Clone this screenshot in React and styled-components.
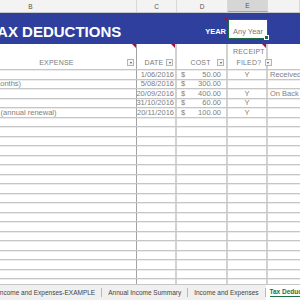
import React from "react";
import styled, { createGlobalStyle, css } from "styled-components";

const Global = createGlobalStyle`
  html, body { margin: 0; padding: 0; background: #fff; }
  body { font-family: "Liberation Sans", Arial, sans-serif; overflow: hidden; }
`;

const COLS = "212px 40px 51px 40px 32px";

const Sheet = styled.div`
  width: 300px;
  height: 300px;
  display: flex;
  flex-direction: column;
  overflow: hidden;
  background: #fff;
`;

const Viewport = styled.div`
  flex: 1;
  overflow: hidden;
  position: relative;
`;

const Canvas = styled.div`
  width: 375px;
  margin-left: -75px;
  display: flex;
  flex-direction: column;
`;

const ColHeaderBar = styled.div`
  display: grid;
  grid-template-columns: ${COLS};
  height: 13px;
  background: #f3f3f3;
  box-sizing: border-box;
  border-bottom: 1px solid #c9c9c9;
`;

const ColLetter = styled.div`
  display: flex;
  align-items: center;
  justify-content: center;
  font-size: 6.5px;
  color: #555;
  box-sizing: border-box;
  border-right: 1px solid #d9d9d9;
  ${(p) =>
    p.$active &&
    css`
      background: #d6d6d6;
      border-bottom: 1px solid #8fb39d;
    `}
`;

const Banner = styled.div`
  display: grid;
  grid-template-columns: 252px 51px 40px 32px;
  height: 31px;
  background: #2e3f9d;
  align-items: center;
`;

const Title = styled.div`
  color: #fff;
  font-weight: bold;
  font-size: 15px;
  padding-left: 64px;
  padding-top: 5px;
  white-space: nowrap;
  overflow: hidden;
`;

const YearLabel = styled.div`
  position: relative;
  align-self: stretch;
  display: flex;
  align-items: flex-end;
  justify-content: flex-end;
  padding: 0 2px 8px 0;
  color: #fff;
  font-weight: bold;
  font-size: 7.5px;
`;

const Marker = styled.span`
  position: absolute;
  right: 0;
  top: ${(p) => p.$top || 0}px;
  width: 0;
  height: 0;
  border-top: 4px solid #9b1544;
  border-left: 4px solid transparent;
`;

const YearBox = styled.div`
  position: relative;
  height: 20px;
  box-sizing: border-box;
  background: #fff;
  border: 1px solid #1d6b40;
  display: flex;
  align-items: flex-end;
  padding: 0 0 2px 4px;
  font-size: 7.5px;
  color: #7a7a7a;
  &::after {
    content: "";
    position: absolute;
    right: -2px;
    bottom: -2px;
    width: 3px;
    height: 3px;
    background: #1d6b40;
    border: 1px solid #fff;
  }
`;

const Row = styled.div`
  display: grid;
  grid-template-columns: ${COLS};
  height: ${(p) => p.$h || 9.5}px;
  box-sizing: border-box;
  border-bottom: 1px solid #c6c6c6;
  box-shadow: 0 1px 0 #ececec;
  font-size: 7.5px;
  color: #808080;
`;

const Cell = styled.div`
  position: relative;
  box-sizing: border-box;
  display: flex;
  align-items: center;
  overflow: hidden;
  white-space: nowrap;
  border-right: ${(p) => (p.$first ? "1px solid #a3a3a3" : p.$last ? "none" : "2px solid #d2d2d2")};
  justify-content: ${(p) => p.$align || "flex-start"};
  padding: ${(p) => p.$pad || "0 1px"};
`;

const Shifted = styled.span`
  margin-left: ${(p) => p.$shift || 0}px;
`;

const HeadCell = styled(Cell)`
  align-items: flex-end;
  padding-bottom: 1px;
  overflow: visible;
  font-size: 7px;
  color: #7a7a7a;
  text-transform: uppercase;
  letter-spacing: 0.2px;
`;

const HeadText = styled.div`
  flex: 1;
  text-align: center;
  line-height: 11px;
  padding-left: ${(p) => p.$indent || 0}px;
`;

const Filter = styled.span`
  flex: none;
  width: 7px;
  height: 7px;
  box-sizing: border-box;
  border: 1px solid #b5b5b5;
  background: #f6f6f6;
  margin: 0 1px 2px 0;
  display: flex;
  align-items: center;
  justify-content: center;
  &::before {
    content: "";
    border-top: 2px solid #555;
    border-left: 1.5px solid transparent;
    border-right: 1.5px solid transparent;
  }
`;

const Money = styled.div`
  flex: 1;
  display: flex;
  justify-content: space-between;
  padding: 0 5px 0 4px;
`;

const TabBar = styled.div`
  height: 16px;
  flex: none;
  display: flex;
  align-items: stretch;
  background: #f0f0f0;
  box-sizing: border-box;
  border-top: 1px solid #c6c6c6;
  overflow: hidden;
  font-size: 6.5px;
  color: #444;
`;

const Tab = styled.div`
  flex: none;
  display: flex;
  align-items: center;
  white-space: nowrap;
  padding: 0 6px;
  margin-left: ${(p) => p.$shift || 0}px;
  border-right: 1px solid #b9b9b9;
  margin-top: 3px;
  margin-bottom: 3px;
  ${(p) =>
    p.$active &&
    css`
      margin: -1px 0 0 0;
      padding: 0 4px;
      border: none;
      background: #fff;
      color: #1e7145;
      font-weight: bold;
      span {
        border-bottom: 1.5px solid #1e7145;
        line-height: 9px;
      }
    `}
`;

const rows = [
  { b: "", c: "1/06/2016", d: "50.00", e: "Y", f: "Received" },
  { b: "Internet and phone (12 months)", shift: -10, c: "5/08/2016", d: "300.00", e: "", f: "" },
  { b: "", c: "20/09/2016", d: "400.00", e: "Y", f: "On Back" },
  { b: "", c: "31/10/2016", d: "60.00", e: "Y", f: "" },
  { b: "Accounting software (annual renewal)", shift: 5, c: "20/11/2016", d: "100.00", e: "Y", f: "" },
];

export default function App() {
  const empty = Array.from({ length: 20 });
  return (
    <Sheet>
      <Global />
      <Viewport>
        <Canvas>
          <ColHeaderBar>
            <ColLetter>B</ColLetter>
            <ColLetter>C</ColLetter>
            <ColLetter>D</ColLetter>
            <ColLetter $active>E</ColLetter>
            <ColLetter />
          </ColHeaderBar>
          <Banner>
            <Title>TAX DEDUCTIONS</Title>
            <YearLabel>
              YEAR
              <Marker $top={5} />
            </YearLabel>
            <YearBox>Any Year</YearBox>
            <div />
          </Banner>
          <Row $h={26}>
            <HeadCell $first>
              <HeadText $indent={60}>Expense</HeadText>
              <Filter />
              <Marker />
            </HeadCell>
            <HeadCell>
              <HeadText $indent={4}>Date</HeadText>
              <Filter />
              <Marker />
            </HeadCell>
            <HeadCell>
              <HeadText $indent={6}>Cost</HeadText>
              <Filter />
            </HeadCell>
            <HeadCell>
              <HeadText $indent={4}>
                Receipt
                <br />
                Filed?
              </HeadText>
              <Filter />
              <Marker />
            </HeadCell>
            <HeadCell $last />
          </Row>
          {rows.map((r, i) => (
            <Row key={i}>
              <Cell $first>
                <Shifted $shift={r.shift}>{r.b}</Shifted>
              </Cell>
              <Cell $align="flex-end" $pad="0 1px 0 0">{r.c}</Cell>
              <Cell $pad="0">
                <Money>
                  <span>$</span>
                  <span>{r.d}</span>
                </Money>
              </Cell>
              <Cell $align="center">{r.e}</Cell>
              <Cell $last $pad="0 0 0 2px">{r.f}</Cell>
            </Row>
          ))}
          {empty.map((_, i) => (
            <Row key={"e" + i}>
              <Cell $first />
              <Cell />
              <Cell />
              <Cell />
              <Cell $last />
            </Row>
          ))}
        </Canvas>
      </Viewport>
      <TabBar>
        <Tab $shift={-8}>Income and Expenses-EXAMPLE</Tab>
        <Tab>Annual Income Summary</Tab>
        <Tab>Income and Expenses</Tab>
        <Tab $active>
          <span>Tax Deductions</span>
        </Tab>
      </TabBar>
    </Sheet>
  );
}
